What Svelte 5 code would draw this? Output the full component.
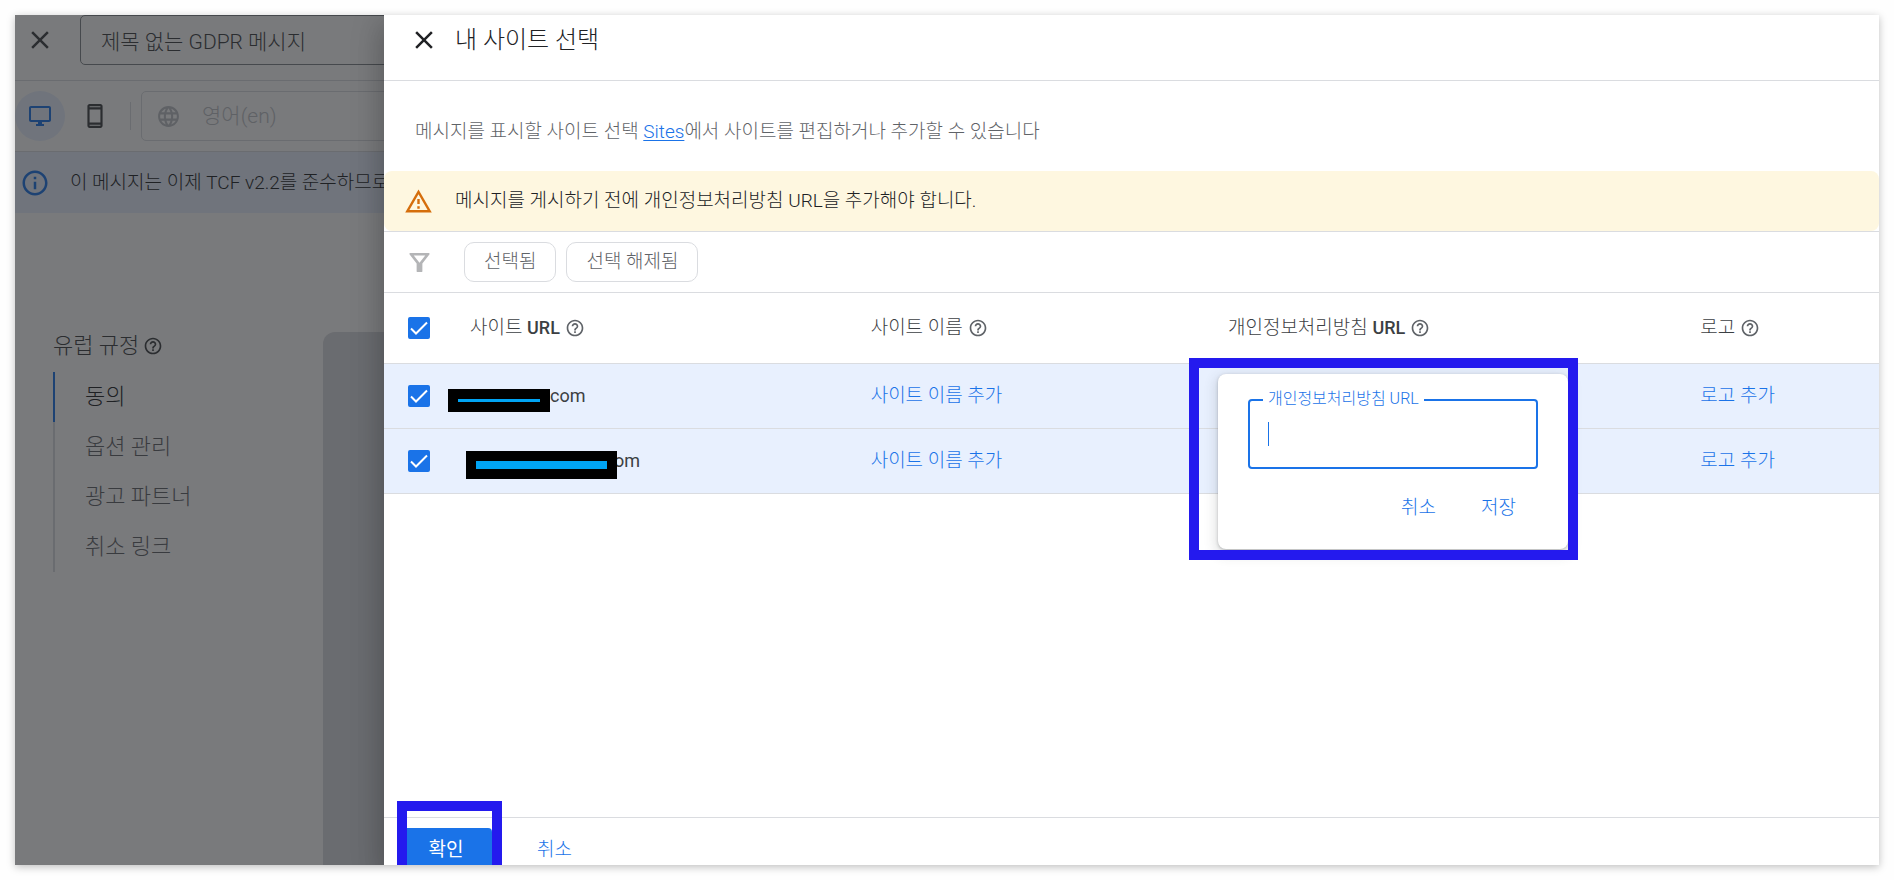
<script>
    const icons = {
        close: "M19 6.41L17.59 5 12 10.59 6.41 5 5 6.41 10.59 12 5 17.59 6.41 19 12 13.41 17.59 19 19 17.59 13.41 12z",
        desktop: "M21 2H3c-1.1 0-2 .9-2 2v12c0 1.1.9 2 2 2h7v2H8v2h8v-2h-2v-2h7c1.1 0 2-.9 2-2V4c0-1.1-.9-2-2-2zm0 14H3V4h18v12z",
        phone: "M17 1H7c-1.1 0-2 .9-2 2v18c0 1.1.9 2 2 2h10c1.1 0 2-.9 2-2V3c0-1.1-.9-2-2-2zm0 20H7v-1h10v1zm0-3H7V6h10v12zm0-14H7V3h10v1z",
        globe: "M11.99 2C6.47 2 2 6.48 2 12s4.47 10 9.99 10C17.52 22 22 17.52 22 12S17.52 2 11.99 2zm6.93 6h-2.95c-.32-1.25-.78-2.45-1.38-3.56 1.84.63 3.37 1.91 4.33 3.56zM12 4.04c.83 1.2 1.48 2.53 1.91 3.96h-3.82c.43-1.43 1.08-2.76 1.91-3.96zM4.26 14C4.1 13.36 4 12.69 4 12s.1-1.36.26-2h3.38c-.08.66-.14 1.32-.14 2s.06 1.34.14 2H4.26zm.82 2h2.95c.32 1.25.78 2.45 1.38 3.56-1.84-.63-3.37-1.9-4.33-3.56zm2.95-8H5.08c.96-1.66 2.49-2.93 4.33-3.56C8.81 5.55 8.35 6.75 8.03 8zM12 19.96c-.83-1.2-1.48-2.53-1.91-3.96h3.82c-.43 1.43-1.08 2.76-1.91 3.96zM14.34 14H9.66c-.09-.66-.16-1.32-.16-2s.07-1.35.16-2h4.68c.09.65.16 1.32.16 2s-.07 1.34-.16 2zm.25 5.56c.6-1.11 1.06-2.31 1.38-3.56h2.95c-.96 1.65-2.49 2.93-4.33 3.56zM16.36 14c.08-.66.14-1.32.14-2s-.06-1.34-.14-2h3.38c.16.64.26 1.31.26 2s-.1 1.36-.26 2h-3.38z",
        info: "M11 7h2v2h-2zm0 4h2v6h-2zm1-9C6.48 2 2 6.48 2 12s4.48 10 10 10 10-4.48 10-10S17.52 2 12 2zm0 18c-4.41 0-8-3.59-8-8s3.59-8 8-8 8 3.59 8 8-3.59 8-8 8z",
        help: "M11 18h2v-2h-2v2zm1-16C6.48 2 2 6.48 2 12s4.48 10 10 10 10-4.48 10-10S17.52 2 12 2zm0 18c-4.41 0-8-3.59-8-8s3.59-8 8-8 8 3.59 8 8-3.59 8-8 8zm0-14c-2.21 0-4 1.79-4 4h2c0-1.1.9-2 2-2s2 .9 2 2c0 2-3 1.75-3 5h2c0-2.25 3-2.5 3-5 0-2.21-1.79-4-4-4z",
        warning: "M12 5.99L19.53 19H4.47L12 5.99M12 2L1 21h22L12 2zm1 14h-2v2h2v-2zm0-6h-2v4h2v-4z",
        filter: "M2.5 2h19c.9 0 1.3 1 .8 1.7L15 13v8c0 .6-.4 1-1 1h-4c-.6 0-1-.4-1-1v-8L1.7 3.7C1.2 3 1.6 2 2.5 2zM6 4.7l6 7.6 6-7.6z",
        check: "M3 11.5l5 5L19 5.5",
    };

    const navItems = ["동의", "옵션 관리", "광고 파트너", "취소 링크"];

    const columns = [
        { name: "사이트", latin: "URL" },
        { name: "사이트 이름" },
        { name: "개인정보처리방침", latin: "URL" },
        { name: "로고" },
    ];

    let sites = [
        { tail: "com", mask: "short", checked: true, editing: true },
        { tail: "om", mask: "long", checked: true, editing: false },
    ];

    let privacyUrl = "";

    $: allChecked = sites.every((site) => site.checked);

    function toggleAll() {
        const next = !allChecked;
        sites = sites.map((site) => ({ ...site, checked: next }));
    }
</script>

{#snippet icon(name, size)}
    <svg width={size} height={size} viewBox="0 0 24 24" fill="currentColor" aria-hidden="true">
        <path d={icons[name]} />
    </svg>
{/snippet}

{#snippet tick()}
    <svg width="22" height="22" viewBox="0 0 22 22" fill="none" stroke="#fff" stroke-width="2" aria-hidden="true">
        <path d={icons.check} />
    </svg>
{/snippet}

<main>
    <div class="window">
        <section class="editor">
            <header class="editor-head">
                <button class="icon-btn" aria-label="닫기">{@render icon("close", 30)}</button>
                <input class="message-name" aria-label="메시지 이름" value="제목 없는 GDPR 메시지" />
            </header>

            <div class="toolbar">
                <button class="device active" aria-label="데스크톱">{@render icon("desktop", 24)}</button>
                <button class="device" aria-label="모바일">{@render icon("phone", 26)}</button>
                <span class="divider"></span>
                <button class="language" disabled>
                    {@render icon("globe", 25)}
                    <span>영어(en)</span>
                </button>
            </div>

            <div class="info">
                {@render icon("info", 30)}
                <span>이 메시지는 이제 TCF v2.2를 준수하므로</span>
            </div>

            <div class="editor-body">
                <nav>
                    <h2>유럽 규정 {@render icon("help", 20)}</h2>
                    <ul>
                        {#each navItems as item, i}
                            <li class:current={i === 0}><a href="#step-{i + 1}">{item}</a></li>
                        {/each}
                    </ul>
                </nav>
                <div class="preview"></div>
            </div>
            <div class="scrim"></div>
        </section>

        <section class="panel">
            <header class="panel-head">
                <button class="icon-btn" aria-label="닫기">{@render icon("close", 30)}</button>
                <h1>내 사이트 선택</h1>
            </header>

            <p class="intro">
                메시지를 표시할 사이트 선택 <a href="#sites">Sites</a>에서 사이트를 편집하거나 추가할 수 있습니다
            </p>

            <div class="warning">
                {@render icon("warning", 29)}
                <span>메시지를 게시하기 전에 개인정보처리방침 URL을 추가해야 합니다.</span>
            </div>

            <div class="filters">
                <span class="funnel">{@render icon("filter", 23)}</span>
                <button class="chip">선택됨</button>
                <button class="chip">선택 해제됨</button>
            </div>

            <table>
                <thead>
                    <tr>
                        <th class="col-check">
                            <label class="check">
                                <input type="checkbox" aria-label="모두 선택" checked={allChecked} on:change={toggleAll} />
                                {@render tick()}
                            </label>
                        </th>
                        {#each columns as column, i}
                            <th class="col-{i}">
                                <span class="th-label">
                                    <span>{column.name} {#if column.latin}<b>{column.latin}</b>{/if}</span>
                                    {@render icon("help", 20)}
                                </span>
                            </th>
                        {/each}
                    </tr>
                </thead>
                <tbody>
                    {#each sites as site}
                        <tr>
                            <td class="col-check">
                                <label class="check">
                                    <input type="checkbox" aria-label="사이트 선택" bind:checked={site.checked} />
                                    {@render tick()}
                                </label>
                            </td>
                            <td>
                                <span class="site {site.mask}"><span class="mask"></span>{site.tail}</span>
                            </td>
                            <td><button class="link">사이트 이름 추가</button></td>
                            <td class="privacy">
                                {#if site.editing}
                                    <div class="callout">
                                        <form class="popup" on:submit|preventDefault>
                                            <div class="field">
                                                <label for="privacy-url">개인정보처리방침 URL</label>
                                                <input id="privacy-url" type="text" bind:value={privacyUrl} />
                                                <span class="caret"></span>
                                            </div>
                                            <div class="popup-actions">
                                                <button type="button" class="link">취소</button>
                                                <button class="link">저장</button>
                                            </div>
                                        </form>
                                    </div>
                                {/if}
                            </td>
                            <td><button class="link">로고 추가</button></td>
                        </tr>
                    {/each}
                </tbody>
            </table>

            <footer>
                <div class="confirm-wrap">
                    <button class="confirm">확인</button>
                </div>
                <button class="link">취소</button>
            </footer>
        </section>
    </div>
</main>

<style>
    :global(body) {
        background: #fefefe;
    }

    main {
        box-sizing: border-box;
        height: 100vh;
        padding: 15px;
        font-family: Roboto, "Noto Sans CJK KR", sans-serif;
        font-size: 19px;
        font-weight: 300;
        line-height: 24px;
        color: #3c4043;
    }

    main :global(*) {
        box-sizing: border-box;
    }

    svg {
        display: block;
        flex: none;
    }

    button,
    input {
        font: inherit;
        color: inherit;
        background: none;
        border: 0;
        margin: 0;
        padding: 0;
    }

    button {
        cursor: pointer;
        white-space: nowrap;
    }

    h1,
    h2,
    p,
    ul {
        margin: 0;
        padding: 0;
        font-weight: inherit;
    }

    .window {
        display: flex;
        height: 100%;
        overflow: hidden;
        background: #fff;
        box-shadow: 0 2px 8px rgba(0, 0, 0, 0.25);
    }

    /* message editor behind the panel */
    .editor {
        position: relative;
        display: flex;
        flex-direction: column;
        flex: 0 0 369px;
        overflow: hidden;
        white-space: nowrap;
    }

    .scrim {
        position: absolute;
        inset: 0;
        background: rgba(32, 33, 36, 0.6);
    }

    .editor-head {
        display: flex;
        gap: 25px;
        height: 66px;
        padding-left: 10px;
        border-bottom: 1px solid #dadce0;
    }

    .icon-btn {
        display: flex;
        align-items: center;
        justify-content: center;
        width: 30px;
        height: 50px;
    }

    .message-name {
        flex: 0 0 400px;
        height: 50px;
        padding: 0 20px;
        border: 1px solid #80868b;
        border-radius: 5px;
        font-size: 21px;
    }

    .toolbar {
        display: flex;
        align-items: center;
        height: 71px;
        border-bottom: 1px solid #dadce0;
    }

    .device {
        display: flex;
        flex: none;
        align-items: center;
        justify-content: center;
        width: 50px;
        height: 50px;
        margin-right: 5px;
        border-radius: 50%;
    }

    .device.active {
        color: #1a73e8;
        background: #e8f0fe;
    }

    .divider {
        height: 28px;
        margin: 0 10px 0 5px;
        border-left: 1px solid #dadce0;
    }

    .language {
        display: flex;
        flex: 0 0 300px;
        align-items: center;
        gap: 21px;
        height: 50px;
        padding-left: 14px;
        border: 1px solid #dadce0;
        border-radius: 5px;
        font-size: 21px;
        color: #bdc1c6;
    }

    .info {
        display: flex;
        align-items: center;
        gap: 20px;
        height: 61px;
        padding-left: 5px;
        background: #e8f0fe;
        color: #202124;
    }

    .info :global(svg) {
        color: #1a73e8;
    }

    .editor-body {
        display: flex;
        flex: 1;
        justify-content: space-between;
        padding-left: 38px;
        padding-top: 119px;
        font-size: 22px;
    }

    nav h2 {
        display: flex;
        align-items: center;
        gap: 4px;
        height: 28px;
        margin-bottom: 12px;
        font-size: 22px;
        font-weight: 300;
    }

    nav ul {
        list-style: none;
    }

    nav li {
        height: 50px;
        padding-left: 30px;
        border-left: 2px solid #dadce0;
        line-height: 50px;
        color: #5f6368;
    }

    nav li.current {
        border-color: #1a73e8;
        color: #202124;
    }

    nav a {
        color: inherit;
        text-decoration: none;
    }

    .preview {
        width: 61px;
        border-top-left-radius: 12px;
        background: #dadce0;
    }

    /* site selection panel */
    .panel {
        position: relative;
        display: flex;
        flex: 1;
        flex-direction: column;
        min-width: 0;
        background: #fff;
        box-shadow:
            0 16px 24px 2px rgba(0, 0, 0, 0.14),
            0 6px 30px 5px rgba(0, 0, 0, 0.12);
    }

    .panel-head {
        display: flex;
        gap: 16px;
        height: 66px;
        padding-left: 25px;
        border-bottom: 1px solid #dadce0;
        color: #202124;
    }

    .panel-head h1 {
        font-size: 24px;
        line-height: 50px;
    }

    .intro {
        padding: 39px 31px 27px;
        color: #5f6368;
    }

    .intro a {
        color: #1a73e8;
        text-underline-offset: 2px;
    }

    .warning {
        display: flex;
        align-items: center;
        gap: 22px;
        height: 60px;
        padding-left: 20px;
        border-radius: 8px;
        background: #fef7e0;
        color: #202124;
    }

    .warning :global(svg) {
        color: #d56e0c;
    }

    .filters {
        display: flex;
        align-items: center;
        gap: 10px;
        height: 62px;
        padding-left: 24px;
        border-top: 1px solid #dadce0;
        border-bottom: 1px solid #dadce0;
    }

    .funnel {
        margin-right: 23px;
        color: #b4b5b7;
    }

    .chip {
        height: 40px;
        padding: 0 19px;
        border: 1px solid #dadce0;
        border-radius: 10px;
        line-height: 36px;
        color: #5f6368;
    }

    table {
        width: 100%;
        table-layout: fixed;
        border-collapse: separate;
        border-spacing: 0;
    }

    th,
    td {
        height: 65px;
        padding: 0;
        border-bottom: 1px solid #dadce0;
        text-align: left;
        font-weight: 300;
    }

    th {
        height: 71px;
    }

    tbody tr {
        background: #e8f0fe;
    }

    th.col-check {
        width: 86px;
    }

    .col-check {
        padding-left: 24px;
    }

    .col-0 {
        width: 26.8%;
    }

    .col-1 {
        width: 23.9%;
    }

    .col-2 {
        width: 31.6%;
    }

    .check {
        display: grid;
        width: 22px;
    }

    .check > :global(*) {
        grid-area: 1 / 1;
    }

    .check input {
        appearance: none;
        width: 22px;
        height: 22px;
        border: 2px solid #5f6368;
        border-radius: 2px;
    }

    .check input:checked {
        border-color: #1a73e8;
        background: #1a73e8;
    }

    .check :global(svg) {
        pointer-events: none;
    }

    .th-label {
        display: flex;
        align-items: center;
        gap: 5px;
    }

    .th-label b {
        font-size: 18px;
        font-weight: 500;
    }

    .th-label :global(svg) {
        color: #5f6368;
    }

    .site {
        display: flex;
        align-items: center;
        font-size: 18px;
        font-weight: 400;
    }

    .mask {
        flex: none;
        z-index: 1;
        margin-top: 8px;
        border: 10px solid #000;
        background: #00a4f4;
    }

    .short .mask {
        width: 102px;
        height: 23px;
        margin-left: -22px;
    }

    .long .mask {
        width: 151px;
        height: 28px;
        margin-left: -4px;
        margin-right: -3px;
    }

    .link {
        color: #1a73e8;
    }

    .privacy {
        position: relative;
    }

    /* blue frame over the popup */
    .callout {
        position: absolute;
        z-index: 2;
        top: -6px;
        left: -39px;
        padding: 16px 10px 11px 29px;
    }

    .callout::after {
        content: "";
        position: absolute;
        inset: 0;
        border: 10px solid #241aee;
        pointer-events: none;
    }

    .popup {
        width: 350px;
        height: 175px;
        padding: 25px 30px 0;
        border-radius: 8px;
        background: #fff;
        box-shadow:
            0 1px 3px rgba(60, 64, 67, 0.3),
            0 4px 12px 3px rgba(60, 64, 67, 0.15);
    }

    .field {
        position: relative;
    }

    .field label {
        position: absolute;
        top: -12px;
        left: 15px;
        padding: 0 5px;
        background: #fff;
        font-size: 16px;
        color: #1a73e8;
    }

    .field input {
        display: block;
        width: 100%;
        height: 70px;
        padding: 0 18px;
        border: 2px solid #1a73e8;
        border-radius: 4px;
        outline: 0;
    }

    .caret {
        position: absolute;
        top: 23px;
        left: 20px;
        width: 1px;
        height: 24px;
        background: #1a73e8;
    }

    .popup-actions {
        display: flex;
        justify-content: flex-end;
        gap: 45px;
        padding: 27px 22px 0;
    }

    footer {
        display: flex;
        align-items: flex-start;
        gap: 45px;
        height: 48px;
        margin-top: auto;
        padding: 10px 16px 0;
        border-top: 1px solid #dadce0;
    }

    footer .link {
        height: 44px;
    }

    .confirm-wrap {
        position: relative;
    }

    .confirm-wrap::after {
        content: "";
        position: absolute;
        top: -27px;
        left: -3px;
        box-sizing: border-box;
        width: 105px;
        height: 90px;
        border: 10px solid #241aee;
        pointer-events: none;
    }

    .confirm {
        width: 92px;
        height: 44px;
        border-radius: 4px;
        background: #1a73e8;
        color: #fff;
        font-weight: 400;
    }
</style>
